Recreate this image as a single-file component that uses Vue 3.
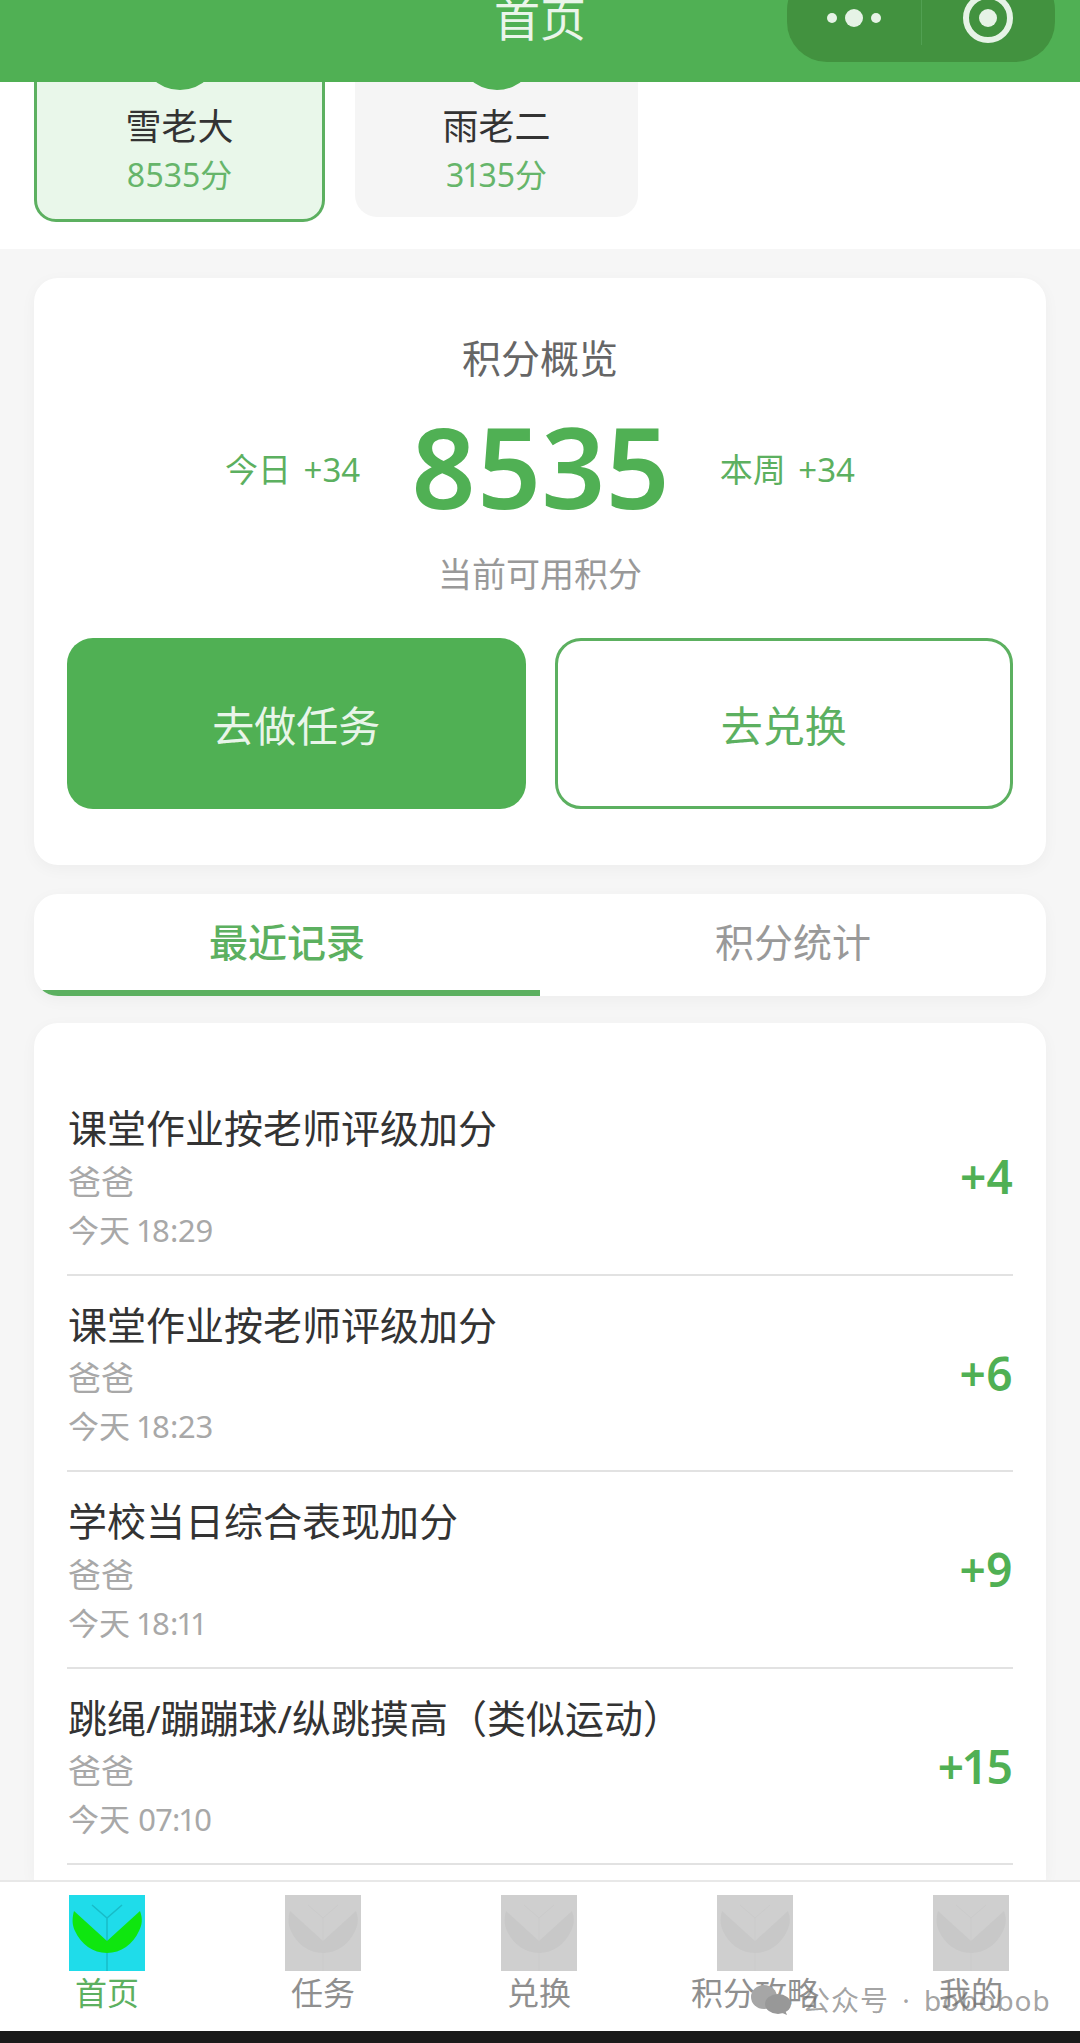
<script setup>
const users = [
  { name: '雪老大', score: '8535分', active: true },
  { name: '雨老二', score: '3135分', active: false }
]

const records = [
  { title: '课堂作业按老师评级加分', who: '爸爸', time: '今天 18:29', points: '+4' },
  { title: '课堂作业按老师评级加分', who: '爸爸', time: '今天 18:23', points: '+6' },
  { title: '学校当日综合表现加分', who: '爸爸', time: '今天 18:11', points: '+9' },
  { title: '跳绳/蹦蹦球/纵跳摸高（类似运动）', who: '爸爸', time: '今天 07:10', points: '+15' }
]

const navItems = [
  { label: '首页', active: true },
  { label: '任务', active: false },
  { label: '兑换', active: false },
  { label: '积分攻略', active: false },
  { label: '我的', active: false }
]
</script>

<template>
  <div class="page">
    <header class="top-bar">
      <span class="top-title">首页</span>
      <div class="capsule">
        <div class="capsule-part">
          <svg width="60" height="20" viewBox="0 0 60 20">
            <circle cx="8" cy="10" r="5" fill="#e6f3e6" />
            <circle cx="30" cy="10" r="9" fill="#e6f3e6" />
            <circle cx="52" cy="10" r="5" fill="#e6f3e6" />
          </svg>
        </div>
        <div class="capsule-line"></div>
        <div class="capsule-part">
          <svg width="54" height="54" viewBox="0 0 54 54">
            <circle cx="27" cy="27" r="22" fill="none" stroke="#e6f3e6" stroke-width="6" />
            <circle cx="27" cy="27" r="9" fill="#e6f3e6" />
          </svg>
        </div>
      </div>
    </header>

    <section class="users">
      <div v-for="u in users" :key="u.name" class="user-card" :class="{ active: u.active }">
        <div class="avatar"></div>
        <div class="user-name">{{ u.name }}</div>
        <div class="user-score">{{ u.score }}</div>
      </div>
    </section>

    <main class="content">
      <section class="card overview">
        <div class="overview-title">积分概览</div>
        <div class="score-row">
          <span class="score-side">今日 +34</span>
          <span class="score-big">8535</span>
          <span class="score-side">本周 +34</span>
        </div>
        <div class="score-note">当前可用积分</div>
        <div class="actions">
          <button class="btn btn-fill">去做任务</button>
          <button class="btn btn-line">去兑换</button>
        </div>
      </section>

      <div class="card tabs">
        <div class="tab tab-on">最近记录</div>
        <div class="tab">积分统计</div>
      </div>

      <section class="card records">
        <div v-for="(r, i) in records" :key="i" class="record">
          <div>
            <div class="record-title">{{ r.title }}</div>
            <div class="record-who">{{ r.who }}</div>
            <div class="record-time">{{ r.time }}</div>
          </div>
          <div class="record-points">{{ r.points }}</div>
        </div>
      </section>
    </main>

    <nav class="bottom-nav">
      <div v-for="item in navItems" :key="item.label" class="nav-item" :class="{ on: item.active }">
        <svg class="nav-icon" width="76" height="76" viewBox="0 0 76 76">
          <rect class="icon-bg" width="76" height="76" />
          <path class="icon-stem" d="M23 10 L38 23 L53 10 M38 23 V76" fill="none" />
          <path class="icon-leaf" d="M5 16 L38 46 L71 16 C74 24 73 30 70 36 C64 49 52 58 38 58 C24 58 12 49 6 36 C3 30 3 23 5 16 Z" />
        </svg>
        <span class="nav-label">{{ item.label }}</span>
      </div>
    </nav>
    <div class="home-strip"></div>

    <div class="watermark">
      <svg width="40" height="30" viewBox="0 0 40 30">
        <ellipse cx="13" cy="12" rx="13" ry="12" fill="#a6a6a6" />
        <ellipse cx="27" cy="19" rx="13" ry="10" fill="#989898" />
        <path d="M29 27 L36 30 L34 25 Z" fill="#989898" />
      </svg>
      <span class="watermark-text">公众号 · bobobob</span>
    </div>
  </div>
</template>

<style>
html,
body {
  margin: 0;
  background: #fff;
}
</style>

<style scoped>
.page {
  position: relative;
  width: 1080px;
  height: 2043px;
  overflow: hidden;
  display: flex;
  flex-direction: column;
  background: #fff;
  font-family: 'Noto Sans', 'Noto Sans CJK SC', sans-serif;
  font-variant-numeric: proportional-nums;
}
.top-bar {
  position: relative;
  z-index: 2;
  flex: none;
  height: 82px;
  background: #50b054;
  overflow: hidden;
}
.top-title {
  display: block;
  margin-top: -4px;
  text-align: center;
  font-size: 46px;
  line-height: 44px;
  color: #eaf5ea;
}
.capsule {
  position: absolute;
  top: -30px;
  left: 787px;
  width: 268px;
  height: 92px;
  border-radius: 40px;
  background: #42923f;
  display: flex;
  align-items: center;
}
.capsule-part {
  flex: 1;
  display: flex;
  justify-content: center;
  align-items: center;
  padding-top: 4px;
}
.capsule-line {
  width: 1px;
  height: 75px;
  margin-top: -17px;
  background: #51a052;
}
.users {
  flex: none;
  display: flex;
  align-items: flex-start;
  gap: 30px;
  padding: 0 34px 27px;
}
.user-card {
  width: 283px;
  height: 223px;
  margin-top: -88px;
  padding-top: 16px;
  box-sizing: border-box;
  border-radius: 22px;
  background: #f5f5f5;
  text-align: center;
}
.user-card.active {
  width: 291px;
  height: 228px;
  background: #e9f7ea;
  border: 3px solid #5cb060;
  padding-top: 13px;
}
.avatar {
  width: 80px;
  height: 80px;
  margin: 0 auto 14px;
  border-radius: 50%;
  background: #50b054;
}
.user-name {
  font-size: 36px;
  line-height: 46px;
  color: #333;
}
.user-score {
  margin-top: 5px;
  font-size: 32px;
  line-height: 40px;
  color: #66b56a;
}
.content {
  flex: 1;
  min-height: 0;
  display: flex;
  flex-direction: column;
  padding: 29px 34px 0;
  background: #f6f6f6;
}
.card {
  flex: none;
  background: #fff;
  border-radius: 24px;
  box-shadow: 0 4px 16px rgba(0, 0, 0, 0.04);
}
.overview {
  padding: 56px 33px;
}
.overview-title {
  text-align: center;
  font-size: 39px;
  line-height: 48px;
  color: #666;
}
.score-row {
  margin-top: 26px;
  height: 120px;
  display: flex;
  justify-content: center;
  align-items: center;
  gap: 50px;
}
.score-side {
  font-size: 33px;
  word-spacing: 4px;
  color: #5cb060;
}
.score-big {
  font-size: 112px;
  line-height: 116px;
  padding-bottom: 4px;
  font-weight: 600;
  color: #50b054;
}
.score-note {
  margin-top: 24px;
  text-align: center;
  font-size: 34px;
  line-height: 44px;
  color: #999;
}
.actions {
  margin-top: 42px;
  display: grid;
  grid-template-columns: 1fr 1fr;
  gap: 29px;
}
.btn {
  height: 171px;
  border-radius: 26px;
  font-family: inherit;
  font-size: 42px;
  padding: 0;
}
.btn-fill {
  border: none;
  background: #50b054;
  color: #e8f5e9;
}
.btn-line {
  border: 3px solid #5cb060;
  background: #fff;
  color: #5cb060;
}
.tabs {
  margin-top: 29px;
  height: 102px;
  display: flex;
  overflow: hidden;
}
.tab {
  flex: 1;
  box-sizing: border-box;
  display: flex;
  align-items: center;
  justify-content: center;
  padding-bottom: 11px;
  font-size: 39px;
  color: #999;
}
.tab-on {
  color: #5cb060;
  font-weight: 500;
  border-bottom: 6px solid #5cb060;
  padding-bottom: 5px;
}
.records {
  flex: 1;
  margin-top: 27px;
  padding: 56px 33px 0;
  border-radius: 24px 24px 0 0;
}
.record {
  display: flex;
  align-items: center;
  justify-content: space-between;
  padding: 22px 0;
  border-bottom: 2px solid #e2e2e2;
}
.record-title {
  margin-left: 1px;
  font-size: 39px;
  line-height: 53.5px;
  color: #333;
}
.record-who {
  margin-left: 1px;
  margin-top: 5px;
  font-size: 33px;
  line-height: 44px;
  color: #a8a8a8;
}
.record-time {
  margin-left: 1px;
  margin-top: 4px;
  font-size: 31px;
  line-height: 44px;
  color: #a8a8a8;
}
.record-points {
  font-size: 46px;
  font-weight: 600;
  color: #50b054;
}
.bottom-nav {
  position: relative;
  z-index: 1;
  flex: none;
  display: grid;
  grid-template-columns: repeat(5, 1fr);
  padding: 13px 0 20px;
  background: #fff;
  border-top: 2px solid #e8e8e8;
}
.nav-item {
  display: flex;
  flex-direction: column;
  align-items: center;
  gap: 4px;
  margin-left: -2px;
}
.nav-label {
  font-size: 32px;
  line-height: 36px;
  color: #8f8f8f;
}
.nav-item.on .nav-label {
  color: #5cb060;
}
.icon-bg {
  fill: #cfcfcf;
}
.icon-leaf {
  fill: #c8c8c8;
}
.icon-stem {
  stroke: #cbcbcb;
  stroke-width: 1;
}
.nav-item.on .icon-bg {
  fill: #1fdcea;
}
.nav-item.on .icon-leaf {
  fill: #0fe60f;
}
.nav-item.on .icon-stem {
  stroke: #18bcc8;
  stroke-width: 1.5;
}
.home-strip {
  flex: none;
  height: 12px;
  background: #1a1a1a;
}
.watermark {
  position: absolute;
  z-index: 3;
  left: 751px;
  top: 1985px;
  display: flex;
  align-items: center;
  gap: 11px;
}
.watermark-text {
  font-size: 28px;
  line-height: 30px;
  letter-spacing: 1px;
  word-spacing: 5px;
  color: rgba(110, 110, 110, 0.65);
  white-space: nowrap;
}
</style>
